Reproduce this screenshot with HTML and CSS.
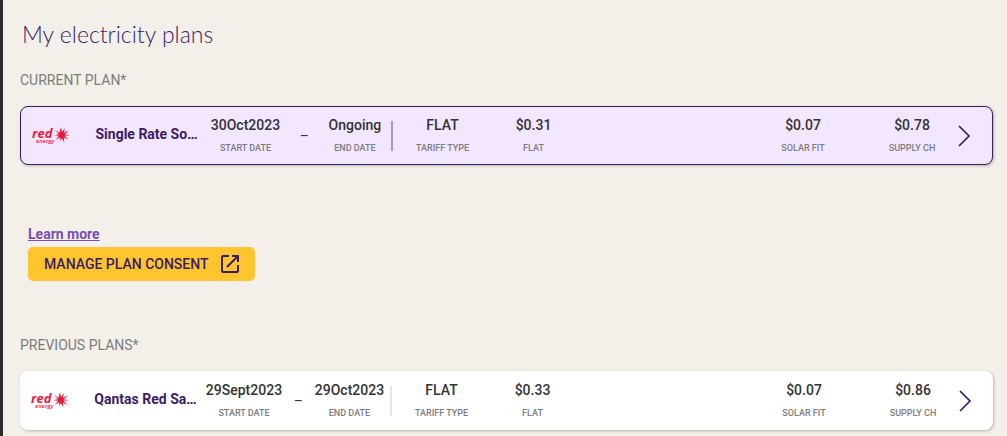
FILE: index.html
```
<!DOCTYPE html>
<html lang="en">
<head>
    <meta charset="utf-8">
    <title>My electricity plans</title>
    <link rel="stylesheet" href="styles.css">
</head>

<body>
    <!-- shared icons -->
    <svg class="sprite" aria-hidden="true">
        <symbol id="red-energy" viewBox="0 0 38 20">
            <g fill="#e8193c">
                <text class="logo-red" x="0" y="12">red</text>
                <text class="logo-energy" x="4" y="17">energy</text>
                <path d="M29 1l1 5L33 2l-1.2 4.8L37 4.6l-4.3 3.6L38 9.3l-5.5.5 4 4-4.6-2.2.4 4.9-2.4-4.3-1.9 2.6.2-3.6-4.4 2.6 3.2-4-4.5-.6 4.4-1.2L23 4l4.4 2.8z"/>
            </g>
        </symbol>
        <symbol id="chevron" viewBox="0 0 13 22">
            <path d="M1 1l10 10L1 21" fill="none" stroke="#3b1c66" stroke-width="1.7"/>
        </symbol>
    </svg>

    <main class="page">
        <h1>My electricity plans</h1>

        <section class="current-plan">
            <h2>CURRENT PLAN*</h2>
            <div class="plan-card active">
                <svg class="plan-logo" role="img" aria-label="Red Energy"><use href="#red-energy"/></svg>
                <div class="plan-name">Single Rate So…</div>
                <div class="plan-dates">
                    <div class="plan-item"><span class="value">30Oct2023</span><span class="label">START DATE</span></div>
                    <span class="dash">–</span>
                    <div class="plan-item"><span class="value">Ongoing</span><span class="label">END DATE</span></div>
                </div>
                <div class="plan-item"><span class="value">FLAT</span><span class="label">TARIFF TYPE</span></div>
                <div class="plan-item"><span class="value">$0.31</span><span class="label">FLAT</span></div>
                <div class="plan-item solar"><span class="value">$0.07</span><span class="label">SOLAR FIT</span></div>
                <div class="plan-item"><span class="value">$0.78</span><span class="label">SUPPLY CH</span></div>
                <button class="open-plan" aria-label="Open plan"><svg><use href="#chevron"/></svg></button>
            </div>
        </section>

        <section class="consent">
            <a class="learn-more" href="#">Learn more</a>
            <button class="consent-button">
                MANAGE PLAN CONSENT
                <svg viewBox="0 0 18 18" aria-hidden="true">
                    <path d="M8 1H2Q1 1 1 2V16Q1 17 2 17H16Q17 17 17 16V10M11 1H17V7M17 1L6 12" fill="none" stroke="currentColor" stroke-width="2"/>
                </svg>
            </button>
        </section>

        <section class="previous-plans">
            <h2>PREVIOUS PLANS*</h2>
            <div class="plan-card">
                <svg class="plan-logo" role="img" aria-label="Red Energy"><use href="#red-energy"/></svg>
                <div class="plan-name">Qantas Red Sa…</div>
                <div class="plan-dates">
                    <div class="plan-item"><span class="value">29Sept2023</span><span class="label">START DATE</span></div>
                    <span class="dash">–</span>
                    <div class="plan-item"><span class="value">29Oct2023</span><span class="label">END DATE</span></div>
                </div>
                <div class="plan-item"><span class="value">FLAT</span><span class="label">TARIFF TYPE</span></div>
                <div class="plan-item"><span class="value">$0.33</span><span class="label">FLAT</span></div>
                <div class="plan-item solar"><span class="value">$0.07</span><span class="label">SOLAR FIT</span></div>
                <div class="plan-item"><span class="value">$0.86</span><span class="label">SUPPLY CH</span></div>
                <button class="open-plan" aria-label="Open plan"><svg><use href="#chevron"/></svg></button>
            </div>
        </section>
    </main>
</body>
</html>
```
FILE: styles.css
```
* {
    box-sizing: border-box;
}

body {
    margin: 0;
    font-family: Roboto, Arial, sans-serif;
    background-color: #f3f0ea;
    color: #333;
}

.sprite {
    display: none;
}

.page {
    border-left: 3px solid #2e2b2b;
    padding: 18px 14px 6px 17px;
}

h1 {
    margin: 0;
    padding-left: 2px;
    font-family: Lato, sans-serif;
    font-size: 23px;
    font-weight: 300;
    line-height: 32px;
    color: #3b1c66;
}

h2 {
    margin: 0 0 16px;
    font-size: 14px;
    font-weight: 400;
    line-height: 20px;
    color: #7d7d7d;
}

.current-plan {
    margin-top: 20px;
}

.previous-plans {
    margin-top: 54px;
}

.plan-card {
    display: grid;
    grid-template-columns: 62px 107px 192px 99px 83px 1fr 92px 12px;
    align-items: center;
    height: 59px;
    padding: 0 22px 0 11px;
    border-radius: 8px;
    background-color: #fff;
    box-shadow: 1px 1px 3px rgba(0, 0, 0, 0.25);
}

.plan-card.active {
    border: 1px solid #3b1c66;
    background-color: #f3e6ff;
}

.plan-logo {
    width: 38px;
    height: 20px;
}

.logo-red {
    font: italic 700 13px "Open Sans", sans-serif;
}

.logo-energy {
    font: italic 600 6px "Open Sans", sans-serif;
}

.plan-name {
    overflow: hidden;
    padding: 0 2px 3px 0;
    font-size: 14px;
    font-weight: 700;
    line-height: 20px;
    text-align: center;
    text-overflow: ellipsis;
    white-space: nowrap;
    color: #3b1c66;
}

.plan-dates {
    display: flex;
    justify-content: space-around;
    align-items: center;
    height: 30px;
    border-right: 2px solid #e6e6e6;
}

.active .plan-dates {
    border-right-color: #ad8fdc;
}

.plan-item {
    display: flex;
    flex-direction: column;
    align-items: center;
    gap: 8px;
    white-space: nowrap;
}

.value {
    font-size: 14px;
    font-weight: 500;
    line-height: 16px;
}

.label {
    font-size: 9px;
    font-weight: 500;
    line-height: 14px;
    color: #7d7d7d;
}

.dash {
    font-size: 14px;
    line-height: 16px;
}

.solar {
    justify-self: end;
    width: 126px;
}

.open-plan {
    padding: 0;
    border: none;
    background: none;
    cursor: pointer;
}

.open-plan svg {
    display: block;
    width: 13px;
    height: 22px;
}

.consent {
    display: flex;
    flex-direction: column;
    align-items: flex-start;
    gap: 3px;
    margin-top: 59px;
    padding-left: 8px;
}

.learn-more {
    font-size: 14px;
    font-weight: 700;
    line-height: 20px;
    color: #7a4db8;
}

.consent-button {
    display: flex;
    align-items: center;
    gap: 12px;
    height: 34px;
    padding: 0 16px;
    border: none;
    border-radius: 5px;
    background-color: #ffc52f;
    color: #3b1c66;
    font-family: inherit;
    font-size: 14px;
    font-weight: 500;
    cursor: pointer;
}

.consent-button svg {
    width: 18px;
    height: 18px;
}
```
